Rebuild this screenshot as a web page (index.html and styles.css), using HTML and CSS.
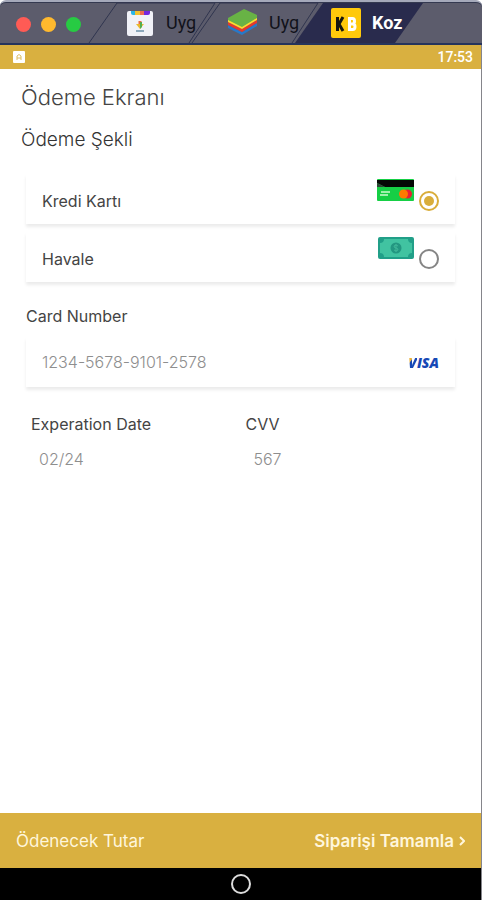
FILE: index.html
```html
<!DOCTYPE html>
<html lang="tr">
<head>
<meta charset="utf-8">
<meta name="viewport" content="width=device-width, initial-scale=1">
<title>Ödeme Ekranı</title>
<link rel="stylesheet" href="styles.css">
</head>
<body>
<div class="window">
  <header class="titlebar">
    <div class="lights">
      <span class="light light-close"></span>
      <span class="light light-min"></span>
      <span class="light light-max"></span>
    </div>
    <nav class="tabs">
      <button class="tab" type="button">
        <svg class="tab-shape" viewBox="0 0 130 41" preserveAspectRatio="none" aria-hidden="true"><path d="M1 41 29 1H127L101 41" fill="#5c5c6c" stroke="#30354f"/></svg>
        <svg class="tab-icon" viewBox="0 0 30 30" aria-hidden="true">
          <rect x="2" y="3" width="26" height="25" rx="2" fill="#f1f2f8"/>
          <path d="M6 3h5v4H8q-2 0-2-2z" fill="#29b6e8"/><path d="M10 3h5v4h-5z" fill="#f2c230"/><path d="M15 3h4v4h-4z" fill="#ef6a52"/><path d="M19 3h6v2q0 2-2 2h-4z" fill="#7426df"/>
          <path d="M15 13v5" stroke="#ee6843" stroke-width="3"/><path d="M11 16h8l-4 5z" fill="#eab92c"/><path d="M15 14h2v5l-2 2z" fill="#52ad50"/>
          <path d="M11 23h8" stroke="#8da9bd" stroke-width="2"/>
        </svg>
        <span class="tab-label">Uyg</span>
      </button>
      <button class="tab" type="button">
        <svg class="tab-shape" viewBox="0 0 130 41" preserveAspectRatio="none" aria-hidden="true"><path d="M1 41 29 1H127L101 41" fill="#5c5c6c" stroke="#30354f"/></svg>
        <svg class="tab-icon" viewBox="0 0 30 30" aria-hidden="true">
          <path d="M0 17 14 24 29 15V18L14 27 0 20z" fill="#2878c8"/>
          <path d="M0 14 14 21 29 12V15L14 24 0 17z" fill="#e6392c"/>
          <path d="M0 11 14 18 29 9V12L14 21 0 14z" fill="#ffd92f"/>
          <path d="M0 10 16 1 29 7V10L14 19 0 12z" fill="#68b345"/>
        </svg>
        <span class="tab-label">Uyg</span>
      </button>
      <button class="tab tab-active" type="button">
        <svg class="tab-shape" viewBox="0 0 130 41" preserveAspectRatio="none" aria-hidden="true"><path d="M1 41 29 1H129L101 41" fill="#292b4d"/></svg>
        <svg class="tab-icon" viewBox="0 0 30 30" aria-hidden="true">
          <rect width="30" height="30" rx="2" fill="#ffc90b"/>
          <path d="M6.500 9v14M12 9 8 16 12 23" fill="none" stroke="#17160f" stroke-width="3"/>
          <path d="M18.500 10.500h3q2 0 2 2.700t-2 2.800h-3zM18.500 16h3q2.500 0 2.500 2.700t-2.500 2.800h-3z" fill="none" stroke="#fff" stroke-width="3"/>
        </svg>
        <span class="tab-label">Koz</span>
      </button>
    </nav>
  </header>

  <div class="screen">
    <div class="statusbar">
      <svg class="status-icon" viewBox="0 0 12 12" aria-hidden="true"><rect width="12" height="12" rx="1" fill="#fff"/><path d="M4 9V5q2-3 4 0v4M4 7h4" fill="none" stroke="#dcbd62"/></svg>
      <span>17:53</span>
    </div>

    <main class="content">
      <h1 class="title">Ödeme Ekranı</h1>
      <form class="form" id="payment">
        <fieldset class="methods">
          <legend class="subtitle">Ödeme Şekli</legend>
          <label class="card">
            <span class="card-text">Kredi Kartı</span>
            <svg class="method-icon" viewBox="0 0 37 22" aria-hidden="true">
              <rect width="37" height="22" rx="1" fill="#16cf45"/>
              <path d="M0 1h37v7H8L0 4z" fill="#050805"/><path d="M0 4 8 8H0z" fill="#304437"/>
              <path d="M4 13h9M3 16h8" stroke="#9ff0ad" stroke-width="2"/>
              <circle cx="30.500" cy="15" r="4.500" fill="#e92035"/><circle cx="26.500" cy="15" r="4.500" fill="#ff7a00"/>
            </svg>
            <input class="radio" type="radio" name="method" checked>
          </label>
          <label class="card">
            <span class="card-text">Havale</span>
            <svg class="method-icon" viewBox="0 0 37 22" aria-hidden="true">
              <rect x="1" width="36" height="22" rx="2" fill="#219f88"/>
              <path d="M7 2h24q0 4 4 4v10q-4 0-4 4H7q0-4-4-4V6q4 0 4-4z" fill="#41c3a1"/>
              <circle cx="19" cy="11" r="5.500" fill="#239781"/>
              <path d="M21 9q-2-2-4 0 0 2 2 2t2 2q-2 2-4 0M19 7v8" fill="none" stroke="#41b899"/>
            </svg>
            <input class="radio" type="radio" name="method">
          </label>
        </fieldset>

        <div class="number">
          <label class="field-label" for="card-number">Card Number</label>
          <div class="card">
            <input class="field" id="card-number" type="text" inputmode="numeric" value="1234-5678-9101-2578">
            <span class="visa"><span class="visa-wing">V</span>ISA</span>
          </div>
        </div>

        <div class="details">
          <div class="detail">
            <label class="field-label" for="expiry">Experation Date</label>
            <input class="field" id="expiry" type="text" value="02/24">
          </div>
          <div class="detail">
            <label class="field-label" for="cvv">CVV</label>
            <input class="field" id="cvv" type="text" inputmode="numeric" value="567">
          </div>
        </div>
      </form>
    </main>

    <footer class="checkout">
      <span class="total">Ödenecek Tutar</span>
      <button class="submit" type="submit" form="payment">Siparişi Tamamla
        <svg class="chevron" viewBox="0 0 6 10" aria-hidden="true"><path d="M1 1 5 5 1 9" fill="none" stroke="currentColor" stroke-width="2"/></svg>
      </button>
    </footer>
    <div class="navbar"><button class="home" type="button" aria-label="Home"></button></div>
  </div>
</div>
</body>
</html>
```
FILE: styles.css
```css
* {
  box-sizing: border-box;
}

body {
  margin: 0;
  background: #fff;
  color: #444;
  font-family: Inter, "Open Sans", sans-serif;
}

button,
input {
  margin: 0;
  padding: 0;
  border: 0;
  background: none;
  color: inherit;
  font: inherit;
}

.window {
  display: flex;
  flex-direction: column;
  min-height: 100vh;
}

.titlebar {
  display: flex;
  height: 45px;
  border-top: 2px solid #a5a9ba;
  border-bottom: 2px solid #26345b;
  border-radius: 6px 6px 0 0;
  background: #5c5c6c;
  box-shadow: inset 0 1px #343950;
}

.lights {
  display: flex;
  align-items: center;
  gap: 10px;
  width: 88px;
  padding: 3px 0 0 16px;
}

.light {
  width: 15px;
  height: 15px;
  border-radius: 50%;
}

.light-close { background: #ff5b55; }
.light-min { background: #ffb92e; }
.light-max { background: #27cb43; }

.tabs {
  display: flex;
}

.tab {
  position: relative;
  display: flex;
  align-items: center;
  gap: 11px;
  width: 130px;
  margin-right: -27px;
  padding-left: 37px;
  color: #11121a;
  font-family: Roboto, sans-serif;
  font-size: 18px;
}

.tab-shape {
  position: absolute;
  inset: 0;
  width: 100%;
  height: 100%;
}

.tab-icon {
  position: relative;
  width: 30px;
  height: 30px;
}

.tab-label {
  position: relative;
}

.tab-active {
  color: #fff;
  font-weight: 700;
}

.screen {
  display: flex;
  flex: 1;
  flex-direction: column;
  border-right: 1px solid #85858b;
}

.statusbar {
  display: flex;
  align-items: center;
  justify-content: space-between;
  height: 24px;
  padding: 0 8px 0 13px;
  background: #d9b040;
  color: #fff;
  font: 500 14px Roboto, sans-serif;
}

.status-icon {
  width: 12px;
  height: 12px;
}

.content {
  flex: 1;
  padding: 14px 21px;
}

.title,
.subtitle {
  margin: 0;
  padding: 0;
  font-weight: 300;
}

.title {
  font-size: 22px;
  line-height: 28px;
}

.form {
  margin-top: 16px;
}

.methods {
  display: flex;
  flex-direction: column;
  gap: 8px;
  min-width: 0;
  margin: 0;
  padding: 0 5px;
  border: 0;
}

.subtitle {
  margin: 0 0 21px -5px;
  color: #333;
  font-size: 19px;
  line-height: 26px;
}

.card {
  display: flex;
  align-items: center;
  gap: 5px;
  height: 50px;
  padding: 0 16px;
  background: #fff;
  box-shadow: 0 3px 3px #ececec;
}

.card-text {
  flex: 1;
  padding-top: 4px;
  font-size: 16px;
}

.method-icon {
  align-self: flex-start;
  width: 37px;
  height: 22px;
  margin-top: 5px;
}

.radio {
  display: grid;
  width: 20px;
  height: 20px;
  margin-top: 4px;
  border: 2px solid #858585;
  border-radius: 50%;
  appearance: none;
  place-items: center;
}

.radio:checked {
  border-color: #d9ad3a;
}

.radio:checked::before {
  width: 10px;
  height: 10px;
  border-radius: 50%;
  background: #d9ad3a;
  content: "";
}

.number {
  padding: 0 5px;
  margin-top: 23px;
}

.field-label {
  display: block;
  font-size: 16px;
  line-height: 22px;
}

.number .card {
  margin-top: 10px;
}

.field {
  flex: 1;
  width: 100%;
  min-width: 0;
  color: #8e8e8e;
  font-size: 16px;
  font-weight: 300;
}

.visa {
  color: #1648b5;
  font: italic 800 14px "Open Sans", sans-serif;
}

.visa-wing {
  background: linear-gradient(125deg, #eab13b 35%, #1648b5 40%);
  background-clip: text;
  color: transparent;
}

.details {
  display: grid;
  grid-template-columns: 1fr 1fr;
  margin-top: 26px;
  padding-left: 10px;
}

.detail .field {
  height: 22px;
  margin-top: 13px;
  padding-left: 8px;
}

.checkout {
  display: flex;
  align-items: center;
  justify-content: space-between;
  height: 55px;
  padding: 0 16px;
  background: #d9b040;
  color: #fff6dc;
  font-size: 17px;
}

.submit {
  display: flex;
  align-items: center;
  gap: 5px;
  font-weight: 600;
}

.chevron {
  width: 6px;
  height: 10px;
}

.navbar {
  display: flex;
  align-items: center;
  justify-content: center;
  height: 32px;
  background: #000;
}

.home {
  width: 20px;
  height: 20px;
  border: 2px solid #ddd;
  border-radius: 50%;
}
```
